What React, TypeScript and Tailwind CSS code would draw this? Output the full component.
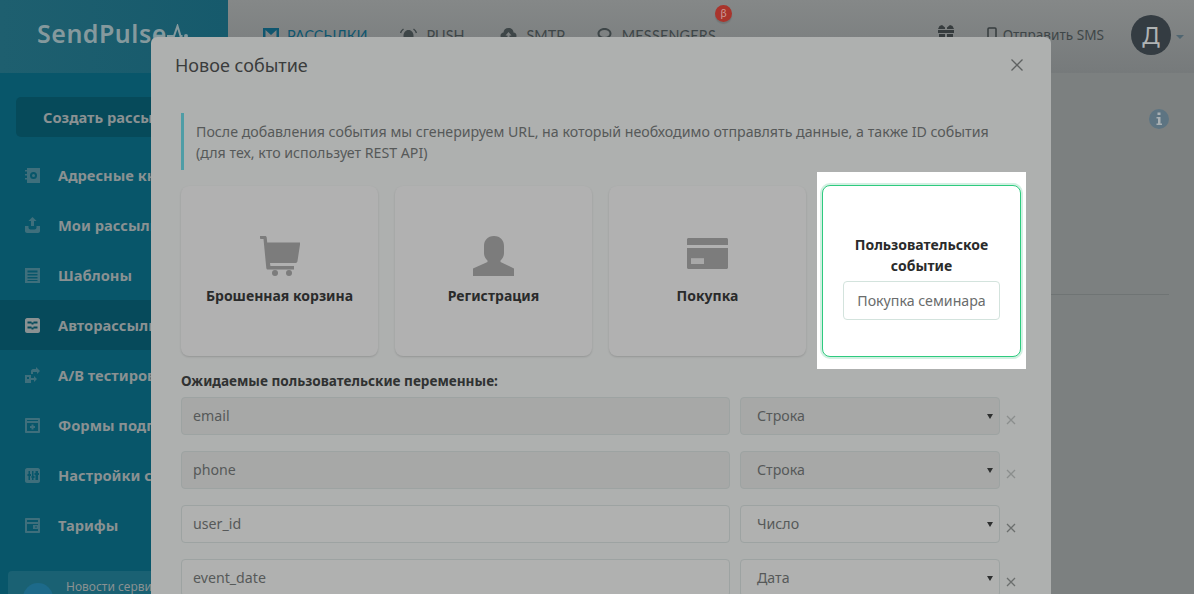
import type { ReactNode } from 'react';

// Dimmed SendPulse page behind an open "new event" modal. One card stays lit.
const FONT = { fontFamily: '"Noto Sans", "Open Sans", sans-serif' };

const sideItems: { label: string; icon: ReactNode; active?: boolean }[] = [
  {
    label: 'Адресные книги',
    icon: (
      <>
        <path fillRule="evenodd" d="M3 1h13v15H3zM9.500 5a3.500 3.500 0 100 7 3.500 3.500 0 000-7zm0 2a1.500 1.500 0 110 3 1.500 1.500 0 010-3z" />
        <path d="M1 3h2v1.500H1zM1 7h2v1.500H1zM1 11h2v1.500H1z" />
      </>
    ),
  },
  {
    label: 'Мои рассылки',
    icon: <path d="M8.500 0l4 4h-2.500v5H7V4H4.500zM1 9h3.500v1.500c0 1 1 2 2 2h4c1 0 2-1 2-2V9H16v5c0 1-1 2-2 2H3c-1 0-2-1-2-2z" />,
  },
  {
    label: 'Шаблоны',
    icon: <path fillRule="evenodd" d="M1 1h15v15H1zM3.500 3.500v2h10v-2zM3.500 7v1.500h10V7zM3.500 10v1.500h10V10zM3.500 13v1h10v-1z" />,
  },
  {
    label: 'Авторассылки',
    active: true,
    icon: <path fillRule="evenodd" d="M3 1h11c1 0 2 1 2 2v11c0 1-1 2-2 2H3c-1 0-2-1-2-2V3c0-1 1-2 2-2zM3.500 4.500v2h4v1h2v-1h4v-2h-4v1h-2v-1zM3.500 9.500v2h4v1h2v-1h4v-2h-4v1h-2v-1z" />,
  },
  {
    label: 'А/В тестирование',
    icon: <path d="M9 2h3V0l4 4-3 3V5H9v2H7V4c0-1 1-2 2-2zM1 8h6v3h3V9l3 3-3 3v-2H7v3H1zM3 10v2h2v-2z" />,
  },
  {
    label: 'Формы подписки',
    icon: <path fillRule="evenodd" d="M2 1h13c.6 0 1 .4 1 1v13c0 .6-.4 1-1 1H2c-.6 0-1-.4-1-1V2c0-.6.4-1 1-1zm1 2v1h11V3zm0 3v8h11V6zm4.500 1.500h2V9H11v2H9.500v1.500h-2V11H6V9h1.500z" />,
  },
  {
    label: 'Настройки сервиса',
    icon: <path fillRule="evenodd" d="M3 1h11c1 0 2 1 2 2v11c0 1-1 2-2 2H3c-1 0-2-1-2-2V3c0-1 1-2 2-2zm1.500 3v3H3.500v2h1v4h1.500V9h1V7H6V4zm3.500 0v5H7.500v2H8v2h1.500v-2h1V9h-1V4zm3.500 0v2h-1v2h1v5H14V8h1V6h-1V4z" />,
  },
  {
    label: 'Тарифы',
    icon: <path fillRule="evenodd" d="M2 1h13c.6 0 1 .4 1 1v13c0 .6-.4 1-1 1H2c-.6 0-1-.4-1-1V2c0-.6.4-1 1-1zm1 2v2h11V3zm0 4v7h11v-2H9V8h5V7zm8 2.500v1h2v-1z" />,
  },
];

const fields = [
  { name: 'email', type: 'Строка', locked: true },
  { name: 'phone', type: 'Строка', locked: true },
  { name: 'user_id', type: 'Число', locked: false },
  { name: 'event_date', type: 'Дата', locked: false },
];

export default function App() {
  return (
    <div className="relative h-[594px] w-[1194px] overflow-hidden bg-[#7c8080] text-[14.2px]" style={FONT}>
      <Header />
      <div className="flex h-[521px]">
        <Sidebar />
        <main className="flex flex-1 flex-col items-end pr-[25px] pt-[36px]">
          <InfoIcon />
          <div className="mt-[165px] h-px w-[400px] bg-[#6f7474]" />
        </main>
      </div>
      <Modal />
    </div>
  );
}

function Header() {
  return (
    <header className="flex h-[73px] bg-gradient-to-b from-[#858888] to-[#767a7b]">
      <div className="flex w-[228px] items-center bg-gradient-to-r from-[#1e5f6f] to-[#165a6c] pb-[5px] pl-[37px]">
        <span className="text-[25px] font-semibold tracking-[.5px] text-[#85999d]">SendPulse</span>
        <svg viewBox="0 0 22 18" className="mt-[-2px] h-[18px] w-[22px] fill-none stroke-[#85999d] stroke-2">
          <path d="M0 12h7l3.500-10 3 10h2" />
          <circle cx="19" cy="12" r="1" />
        </svg>
      </div>
      <nav className="flex flex-1 items-start pl-[35px] pt-[25px] text-[14.4px] text-[#3e4648]" style={{ fontFamily: 'Lato, sans-serif' }}>
        <NavItem label="РАССЫЛКИ" active icon={<path fillRule="evenodd" d="M0 0h16v13H0zM2.500 2v9h11V2l-5.500 5z" />} />
        <NavItem
          label="PUSH"
          className="ml-[33px]"
          icon={
            <>
              <path d="M8 2c3 0 5 2.500 5 5.500V14H3V7.500C3 4.500 5 2 8 2z" />
              <path d="M0 5c.5-1.500 1.500-3 3-4M16 5c-.5-1.500-1.500-3-3-4" fill="none" stroke="currentColor" strokeWidth="1.500" />
            </>
          }
        />
        <NavItem label="SMTP" className="ml-[36px]" icon={<path d="M8 0c3 0 5 2 5 4.500 2 0 3 1.500 3 3.500 0 2-1.500 4-3.500 4h-9C1.500 12 0 10 0 8c0-2 1.500-3.500 3-3.500C3 2 5 0 8 0zm0 4L5 7.500h2V11h2V7.500h2z" />} />
        <NavItem label="MESSENGERS" className="ml-[31px] tracking-[.2px]" icon={<path fillRule="evenodd" d="M8 0c4 0 7 2.500 7 5.500S12 11 8 11c-1 0-2-.2-3-.5L2 13l1-3.500C1.700 8.500 1 7 1 5.500 1 2.500 4 0 8 0zm0 2C5 2 3 3.500 3 5.500S5 9 8 9s5-1.500 5-3.500S11 2 8 2z" />} />
        <span className="ml-[-1px] mt-[-20px] flex h-[17px] w-[17px] items-center justify-center rounded-full bg-[#a9342c] text-[11px] text-[#c99a95] shadow-[0_2px_1px_#0000001f]">
          β
        </span>
      </nav>
      <div className="flex items-start pr-[10px] pt-[15px]">
        <svg viewBox="0 0 16 18" className="mr-[33px] mt-[10px] h-[18px] w-[16px] fill-[#363c3e]">
          <path d="M0 4h7V2.500L4 0 1.500 1zM16 4H9V2.500L12 0l2.500 1zM0 5h16v3H0zM1 9h6v7H1zM9 9h6v7H9z" />
        </svg>
        <svg viewBox="0 0 10 14" className="mr-[6px] mt-[12px] h-[14px] w-[10px] fill-none stroke-[#363c3e] stroke-[1.500]">
          <rect x="1" y="1" width="8" height="12" rx="1" />
        </svg>
        <span className="mr-[27px] mt-[10px] text-[13.6px] text-[#3e4648]">Отправить SMS</span>
        <span className="flex h-[40px] w-[40px] items-center justify-center rounded-full bg-[#343c42] text-[24px] text-[#b0b3b4]">Д</span>
        <span className="ml-[5px] mt-[20px] h-0 w-0 border-x-[4px] border-t-[4px] border-x-transparent border-t-[#4f6570]" />
      </div>
    </header>
  );
}

function NavItem({ label, icon, active, className = '' }: { label: string; icon: ReactNode; active?: boolean; className?: string }) {
  return (
    <span className={`flex items-center ${active ? 'gap-[8px] text-[#0f566f]' : 'gap-[9px]'} ${className}`}>
      <svg viewBox="0 0 16 16" className={`h-[16px] fill-current ${active ? 'w-[16px]' : 'w-[17px]'}`}>
        {icon}
      </svg>
      {label}
    </span>
  );
}

function Sidebar() {
  return (
    <aside className="flex w-[228px] flex-col overflow-hidden bg-[#08566a] pt-[24px] text-[14.7px] font-bold text-[#8a9192]">
      <div className="mx-[16px] flex h-[40px] shrink-0 items-center rounded-[5px] bg-[#064a5a] pl-[27px]">Создать рассылку</div>
      <ul className="mt-[13px] shrink-0">
        {sideItems.map((item) => (
          <li key={item.label} className={`flex h-[50px] items-center pl-[24px] ${item.active ? 'bg-[#064a5b]' : ''}`}>
            <svg viewBox="0 0 17 17" className={`h-[17px] w-[17px] ${item.active ? 'fill-[#8a9192]' : 'fill-[#3f6f7c]'}`}>
              {item.icon}
            </svg>
            <span className="ml-[17px] whitespace-nowrap">{item.label}</span>
          </li>
        ))}
      </ul>
      <div className="mx-[8px] mt-[21px] flex h-[60px] shrink-0 rounded-t-[4px] bg-[#1a6173] pl-[15px] pt-[7px] text-[12px] font-normal">
        <span className="mt-[5px] h-[30px] w-[30px] shrink-0 rounded-full bg-[#1d6a8a]" />
        <span className="ml-[13px] whitespace-nowrap">Новости сервиса</span>
      </div>
    </aside>
  );
}

function InfoIcon() {
  return (
    <svg viewBox="0 0 20 20" className="h-[20px] w-[20px]">
      <circle cx="10" cy="10" r="10" className="fill-[#5d7482]" />
      <path d="M8.500 3.500h3v2.500h-3zM7.500 8h4v6.500h1.500V16H7.500v-1.500H9V9.500H7.500z" className="fill-[#a9b0b3]" />
    </svg>
  );
}

function Modal() {
  return (
    <div className="absolute left-[151px] top-[37px] h-[600px] w-[900px] rounded-[6px] bg-[#aeb0af]">
      <div className="flex h-[56px] items-center justify-between pl-[24px] pr-[27px]">
        <h2 className="text-[18px] text-[#3a3c3c]">Новое событие</h2>
        <svg viewBox="0 0 14 14" className="h-[14px] w-[14px] fill-none stroke-[#5e6161] stroke-[1.300]">
          <path d="M1.500 1.500l11 11M12.500 1.500l-11 11" />
        </svg>
      </div>
      <div className="px-[30px] pt-[20px]">
        <p className="h-[57px] border-l-[3px] border-[#4f9da6] pl-[12px] pt-[8px] leading-[21px] text-[#565959]">
          После добавления события мы сгенерируем URL, на который необходимо отправлять данные, а также ID события
          <br />
          (для тех, кто использует REST API)
        </p>
        <div className="mt-[16px] grid grid-cols-[repeat(4,197px)] gap-[17px]">
          <EventCard label="Брошенная корзина" icon={<CartIcon />} />
          <EventCard label="Регистрация" icon={<UserIcon />} />
          <EventCard label="Покупка" icon={<CardIcon />} />
          <CustomEventCard />
        </div>
        <h3 className="mt-[15px] text-[13.6px] font-bold leading-[20px] text-[#303232]">Ожидаемые пользовательские переменные:</h3>
        <div className="mt-[6px] flex flex-col gap-[16px]">
          {fields.map((f) => (
            <div key={f.name} className="flex items-center">
              <div className={`flex h-[38px] w-[549px] items-center rounded-[4px] border border-[#9da3a2] pl-[11px] text-[#565959] ${f.locked ? 'bg-[#a7a8a7]' : 'bg-[#b0b1b0]'}`}>
                {f.name}
              </div>
              <div className={`ml-[10px] flex h-[38px] w-[260px] items-center justify-between rounded-[4px] border border-[#9da3a2] pl-[16px] pr-[6px] text-[#565959] ${f.locked ? 'bg-[#a7a8a7]' : 'bg-[#b0b1b0]'}`}>
                {f.type}
                <span className="h-0 w-0 border-x-[3px] border-t-[5px] border-x-transparent border-t-[#2e3030]" />
              </div>
              <svg viewBox="0 0 10 10" className={`ml-[6px] mt-[7px] h-[10px] w-[10px] fill-none stroke-[1.300] ${f.locked ? 'stroke-[#8b8e8d]' : 'stroke-[#6b6e6d]'}`}>
                <path d="M1 1l8 8M9 1l-8 8" />
              </svg>
            </div>
          ))}
        </div>
      </div>
    </div>
  );
}

function EventCard({ label, icon }: { label: string; icon: ReactNode }) {
  return (
    <div className="flex h-[170px] flex-col items-center rounded-[8px] bg-[#b1b1b1] shadow-[0_1px_2px_#00000026]">
      <div className="flex h-[91px] items-end pb-[1px]">{icon}</div>
      <span className="mt-[8px] text-[14px] font-bold text-[#2a2b2b]">{label}</span>
    </div>
  );
}

function CustomEventCard() {
  return (
    <div className="relative h-[170px]">
      {/* lit cut-out around the card, sits over the dimmed modal */}
      <div className="absolute -bottom-[13px] -left-[6px] -right-[6px] -top-[14px] bg-white" />
      <div className="absolute -inset-px flex flex-col items-center rounded-[8px] border-[1.500px] border-[#2ecb7f] bg-white pt-[48px] shadow-[0_0_0_2px_#d2f0e2]">
        <span className="text-center text-[14px] font-bold leading-[21px] text-[#2a2b2b]">
          Пользовательское
          <br />
          событие
        </span>
        <div className="mt-[5px] flex h-[39px] w-[157px] items-center justify-center rounded-[4px] border border-[#d3e3dd] text-[#6a6c6c]">
          Покупка семинара
        </div>
      </div>
    </div>
  );
}

function CartIcon() {
  return (
    <svg viewBox="0 0 40 40" className="h-[40px] w-[40px] fill-[#7c7c7c]">
      <path d="M0 0h5c1 0 1.500.5 1.700 1.500L7.200 6.500H40v2l-2.500 16.500c-.2 1.500-1 2-2.500 2H10l.4 3H34v3.500H8c-1 0-1.500-.5-1.700-1.500L3.500 3H1c-.7 0-1-.5-1-1.500z" />
      <circle cx="15" cy="37" r="3" />
      <circle cx="29" cy="37" r="3" />
    </svg>
  );
}

function UserIcon() {
  return (
    <svg viewBox="0 0 42 40" className="h-[40px] w-[42px] fill-[#7c7c7c]">
      <path d="M21 0c6.500 0 10 4.500 10 10v7c0 3-1.500 6-3.500 7.500v1.500L41 32.500V40H0v-7.500L14.500 26v-1.500C12.500 23 11 20 11 17v-7C11 4.500 14.500 0 21 0z" />
    </svg>
  );
}

function CardIcon() {
  return (
    <svg viewBox="0 0 41 31" className="mb-[7px] h-[31px] w-[41px] fill-[#7c7c7c]">
      <path fillRule="evenodd" d="M1.500 0h38c.8 0 1.500.7 1.500 1.500V7H0V1.500C0 .7.700 0 1.500 0zM0 10h41v19.500c0 .8-.7 1.500-1.500 1.500h-38C.7 31 0 30.300 0 29.500zm4 10.500V26h13v-5.500z" />
      <rect x="4" y="20.500" width="13" height="5.500" fill="#a8a8a8" />
    </svg>
  );
}
